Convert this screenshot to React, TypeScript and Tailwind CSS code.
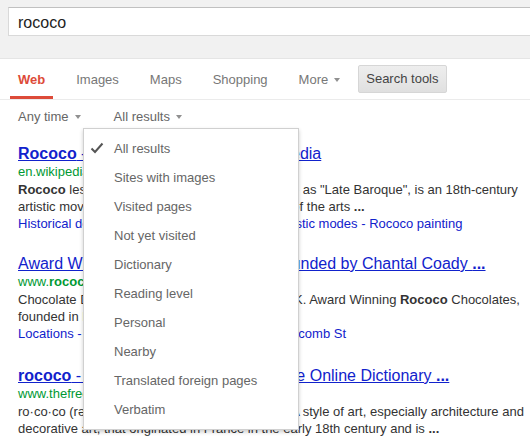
import { ReactNode } from 'react'

const TABS = ['Web', 'Images', 'Maps', 'Shopping']

const FILTERS = [
  'All results',
  'Sites with images',
  'Visited pages',
  'Not yet visited',
  'Dictionary',
  'Reading level',
  'Personal',
  'Nearby',
  'Translated foreign pages',
  'Verbatim',
]

function Arrow() {
  return (
    <span className="ml-[6px] inline-block h-0 w-0 border-x-[3.5px] border-t-[4px] border-x-transparent border-t-[#909090]" />
  )
}

function Result({
  title,
  url,
  lines,
  links,
  gap,
}: {
  title: ReactNode
  url: ReactNode
  lines: ReactNode[]
  links?: ReactNode
  gap: string
}) {
  return (
    <div className={gap}>
      <div className="h-[18px] whitespace-nowrap text-[16px] leading-[18px] text-[#1122cc] underline">
        {title}
      </div>
      <div className="h-[18px] whitespace-nowrap text-[13px] leading-[18px] text-[#093]">
        {url}
      </div>
      {lines.map((l, i) => (
        <div key={i} className="h-[17px] whitespace-nowrap text-[13px] leading-[17px] text-[#333]">
          {l}
        </div>
      ))}
      {links && (
        <div className="h-[17px] whitespace-nowrap text-[13px] leading-[17px] text-[#1122cc]">
          {links}
        </div>
      )}
    </div>
  )
}

export default function App() {
  return (
    <div className="relative h-[442px] w-[530px] overflow-hidden bg-white font-['Liberation_Sans',Arial,sans-serif]">
      {/* search header */}
      <div className="h-[59px] border-b border-[#e5e5e5] bg-[#f1f1f1] pt-[7px] pl-[8px]">
        <div className="flex h-[29px] w-[540px] items-center border border-[#d9d9d9] border-t-[#c0c0c0] bg-white pt-[3px] pl-[9px] text-[16px] text-[#222]">
          rococo
        </div>
      </div>

      {/* tabs */}
      <div className="flex h-[41px] items-stretch border-b border-[#ebebeb] pl-[10px] text-[13px]">
        {TABS.map((t, i) => (
          <div
            key={t}
            className={
              i === 0
                ? 'mr-[15px] flex items-center border-b-[3px] border-[#dd4b39] px-2 pt-[4px] font-bold text-[#dd4b39]'
                : 'mr-[15px] flex items-center px-2 pt-[2px] text-[#777]'
            }
          >
            {t}
          </div>
        ))}
        <div className="flex items-center px-2 pt-[2px] text-[#777]">
          More
          <Arrow />
        </div>
        <div className="ml-[10px] flex items-center">
          <div className="flex h-[28px] items-center rounded-[2px] border border-[#d6d6d6] bg-gradient-to-b from-[#eeeeee] to-[#e0e0e0] px-[7px] text-[#444]">
            Search tools
          </div>
        </div>
      </div>

      {/* tool filters */}
      <div className="flex h-[34px] items-center pl-[18px] text-[13px] text-[#666]">
        <span>Any time</span>
        <Arrow />
        <span className="ml-[33px]">All results</span>
        <Arrow />
      </div>

      {/* results */}
      <div className="pt-[11px] pl-[18px]">
        <Result
          gap="mb-[23px]"
          title={
            <>
              <b>Rococo</b> - Wikipedia, the free encyclopedia
            </>
          }
          url="en.wikipedia.org/wiki/Rococo"
          lines={[
            <>
              <b>Rococo</b> less commonly roccoco, also referred to as "Late Baroque", is an 18th-century
            </>,
            <>
              artistic movement that affected several aspects of the arts <b>...</b>
            </>,
          ]}
          links="Historical development - Decorative arts and artistic modes - Rococo painting"
        />
        <Result
          gap="mb-[25px]"
          title={
            <>
              Award Winning Rococo Chocolates Founded by Chantal Coady <b>...</b>
            </>
          }
          url={
            <>
              www.<b>rococo</b>chocolates.com/
            </>
          }
          lines={[
            <>
              Chocolate Delivery &amp; Luxury Chocolates Gifts UK. Award Winning <b>Rococo</b> Chocolates,
            </>,
            <>founded in London in 1983 by Chantal Coady.</>,
          ]}
          links="Locations - Belgravia - Marylebone High St - Motcomb St"
        />
        <Result
          gap="mb-0"
          title={
            <>
              <b>rococo</b> - definition of rococo by the Free Online Dictionary <b>...</b>
            </>
          }
          url="www.thefreedictionary.com/rococo"
          lines={[
            <>ro·co·co (rə-kō′kō, rō′kə-kō′) n. 1. often Rococo A style of art, especially architecture and</>,
            <>
              decorative art, that originated in France in the early 18th century and is <b>...</b>
            </>,
          ]}
        />
      </div>

      {/* dropdown menu */}
      <div className="absolute top-[128px] left-[83px] w-[216px] border border-[#d0d0d0] bg-white pt-[5px] pb-[5px] shadow-[0_2px_4px_rgba(0,0,0,0.2)]">
        {FILTERS.map((f, i) => (
          <div key={f} className="relative flex h-[29px] items-center pl-[30px] text-[13px] text-[#666]">
            {i === 0 && (
              <svg
                className="absolute top-[8px] left-[6px]"
                width="14"
                height="12"
                viewBox="0 0 14 12"
                fill="none"
              >
                <path d="M1.5 6.5 L5 10 L12.5 1.5" stroke="#555" strokeWidth="2" />
              </svg>
            )}
            {f}
          </div>
        ))}
      </div>
    </div>
  )
}
